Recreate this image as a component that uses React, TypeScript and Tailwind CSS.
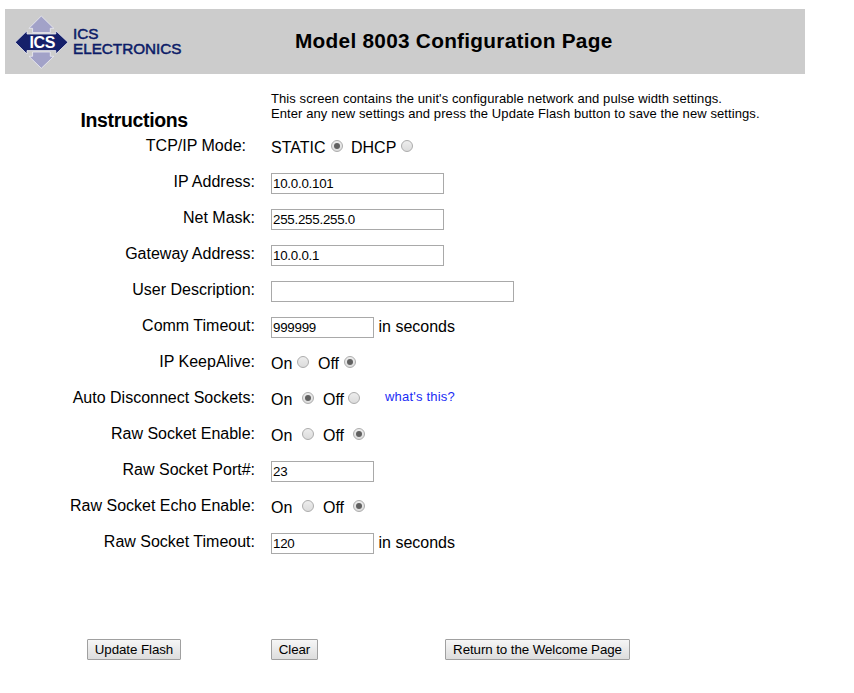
import { useState, type ReactNode } from "react";

function Logo() {
  return (
    <svg width="180" height="65" viewBox="5 9 180 65" role="img" aria-label="ICS Electronics">
      <g stroke="#ececf4" strokeWidth="0.8">
        <path d="M41.3 16 L53.8 28.3 H50.3 V32.6 H32.6 V28.3 H29 Z" fill="#a2a2c8" />
        <path d="M41.3 68.3 L53.8 56.3 H50.3 V52 H32.6 V56.3 H29 Z" fill="#a2a2c8" />
        <path d="M15.2 42.3 L27 30.8 V34 H55.8 V30.8 L68 42.3 L55.8 54 V50.6 H27 V54 Z" fill="#15206a" />
      </g>
      <g fontFamily="'Liberation Sans', Arial, sans-serif">
        <text x="29.5" y="48.2" fontSize="16" fontWeight="700" fill="#fff" textLength="26">ICS</text>
        <g fill="#0c1c68" stroke="#0c1c68" strokeWidth="0.5" fontSize="14.5">
          <text x="73" y="39" textLength="25.5" lengthAdjust="spacingAndGlyphs">ICS</text>
          <text x="73" y="54" textLength="108.5" lengthAdjust="spacingAndGlyphs">ELECTRONICS</text>
        </g>
      </g>
    </svg>
  );
}

function Row({ label, shift = "pr-4", children }: { label: string; shift?: string; children: ReactNode }) {
  return (
    <div className="flex h-9 items-start">
      <div className={`w-[271px] pt-[7px] text-right leading-[18px] ${shift}`}>{label}</div>
      <div className="flex items-start pt-[7px]">{children}</div>
    </div>
  );
}

function Field({ value, width = "w-[173px]" }: { value: string; width?: string }) {
  return (
    <input
      defaultValue={value}
      className={`h-[21px] border border-[#a9a9a9] bg-white px-px text-[13.333px] leading-[17px] tracking-[-0.25px] outline-none ${width}`}
    />
  );
}

type ChoiceProps = {
  options: [string, string];
  initial: number;
  widths: [string, string];
  gap: string;
};

function Choice({ options, initial, widths, gap }: ChoiceProps) {
  const [picked, setPicked] = useState(initial);
  return (
    <div className={`flex ${gap}`}>
      {options.map((name, i) => (
        <label key={name} className="flex">
          <span className={`pt-0.5 leading-[18px] whitespace-nowrap ${widths[i]}`}>{name}</span>
          <button
            type="button"
            onClick={() => setPicked(i)}
            aria-pressed={picked === i}
            className="mt-[3px] flex size-3 items-center justify-center rounded-full border border-[#acacac] bg-linear-to-b from-[#ededed] to-[#dcdcdc]"
          >
            {picked === i && <span className="size-1.5 rounded-full bg-[#606060]" />}
          </button>
        </label>
      ))}
    </div>
  );
}

function Button({ className, children }: { className: string; children: ReactNode }) {
  return (
    <button
      type="button"
      className={`h-[21px] rounded-[1px] border border-[#a0a0a0] bg-linear-to-b from-[#f6f6f6] to-[#dddddd] text-[13.333px] leading-[18px] tracking-[-0.08px] whitespace-nowrap ${className}`}
    >
      {children}
    </button>
  );
}

export default function App() {
  return (
    <div className="h-[693px] w-[854px] overflow-hidden bg-white pt-[9px] font-['Liberation_Sans',Arial,sans-serif] text-base text-black">
      <header className="ml-[5px] flex h-[65px] w-[800px] bg-[#cccccc]">
        <Logo />
        <h1 className="ml-[110px] pt-[19px] text-[20.8px] leading-[26px] font-bold tracking-[0.27px] whitespace-nowrap">
          Model 8003 Configuration Page
        </h1>
      </header>

      <section className="flex h-16 items-start">
        <h2 className="w-[271px] pt-[34px] pl-[80.5px] text-[19.5px] leading-[25px] font-bold tracking-[-0.36px]">Instructions</h2>
        <p className="pt-[17px] text-[13px] leading-[15px] tracking-[0.09px] whitespace-nowrap">
          This screen contains the unit's configurable network and pulse width settings.
          <br />
          Enter any new settings and press the Update Flash button to save the new settings.
        </p>
      </section>

      <main className="-mt-2">
        <Row label="TCP/IP Mode:" shift="pr-[25px]">
          <Choice options={["STATIC", "DHCP"]} initial={0} widths={["w-[60px]", "w-[50px]"]} gap="gap-2" />
        </Row>
        <Row label="IP Address:"><Field value="10.0.0.101" /></Row>
        <Row label="Net Mask:"><Field value="255.255.255.0" /></Row>
        <Row label="Gateway Address:"><Field value="10.0.0.1" /></Row>
        <Row label="User Description:"><Field value="" width="w-[243px]" /></Row>
        <Row label="Comm Timeout:">
          <Field value="999999" width="w-[103px]" />
          <span className="ml-[4.5px] leading-[19px]">in seconds</span>
        </Row>
        <Row label="IP KeepAlive:">
          <Choice options={["On", "Off"]} initial={1} widths={["w-[26px]", "w-[26px]"]} gap="gap-[9px]" />
        </Row>
        <Row label="Auto Disconnect Sockets:">
          <Choice options={["On", "Off"]} initial={0} widths={["w-[31px]", "w-[25px]"]} gap="gap-[9px]" />
          <a className="ml-[25px] text-[13px] leading-[15px] tracking-[0.2px] text-[#1a2cf5]">what's this?</a>
        </Row>
        <Row label="Raw Socket Enable:">
          <Choice options={["On", "Off"]} initial={1} widths={["w-[31px]", "w-[30px]"]} gap="gap-[9px]" />
        </Row>
        <Row label="Raw Socket Port#:"><Field value="23" width="w-[103px]" /></Row>
        <Row label="Raw Socket Echo Enable:">
          <Choice options={["On", "Off"]} initial={1} widths={["w-[31px]", "w-[30px]"]} gap="gap-[9px]" />
        </Row>
        <Row label="Raw Socket Timeout:">
          <Field value="120" width="w-[103px]" />
          <span className="ml-[4.5px] leading-[19px]">in seconds</span>
        </Row>
      </main>

      <footer className="mt-[77px] flex pl-[87px]">
        <Button className="w-[94px]">Update Flash</Button>
        <Button className="ml-[90px] w-[47px]">Clear</Button>
        <Button className="ml-[127px] w-[185px]">Return to the Welcome Page</Button>
      </footer>
    </div>
  );
}
